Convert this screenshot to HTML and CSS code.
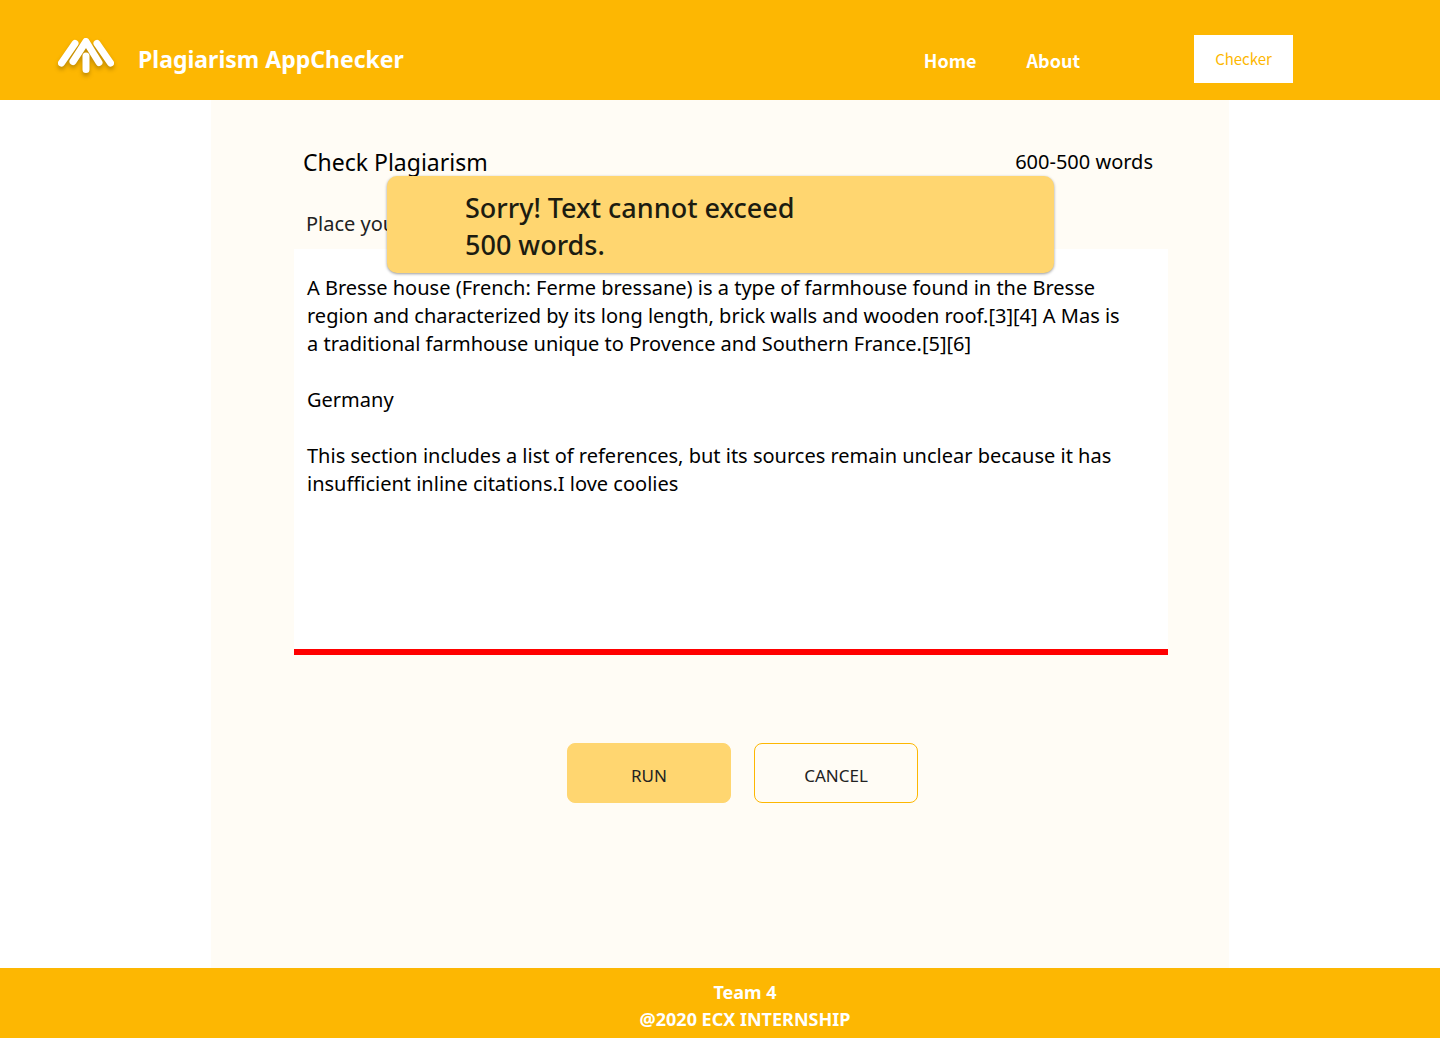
FILE: index.html
```html
<!DOCTYPE html>
<html lang="en">
<head>
<meta charset="utf-8">
<title>Plagiarism AppChecker</title>
<meta name="viewport" content="width=device-width, initial-scale=1">
<link rel="stylesheet" href="styles.css">
</head>
<body>
<header class="header">
  <a class="brand" href="#">
    <svg class="logo" viewBox="0 0 60 44" width="60" height="44" aria-hidden="true">
      <path d="M6.500 26 20 6.500M42 6.500 55.500 26M18 24.500 31 4.500 44 25.500M31 19V32.500"/>
    </svg>
    <span class="brand-name">Plagiarism AppChecker</span>
  </a>
  <nav class="nav">
    <a class="nav-link" href="#">Home</a>
    <a class="nav-link" href="#">About</a>
  </nav>
  <button class="checker" type="button">Checker</button>
</header>
<main class="main">
  <form class="panel">
    <div class="heading">
      <h1 class="title">Check Plagiarism</h1>
      <p class="count">600-500 words</p>
    </div>
    <label class="label" for="text">Place your text</label>
    <textarea class="editor" id="text" spellcheck="false">A Bresse house (French: Ferme bressane) is a type of farmhouse found in the Bresse region and characterized by its long length, brick walls and wooden roof.[3][4] A Mas is a traditional farmhouse unique to Provence and Southern France.[5][6]

Germany

This section includes a list of references, but its sources remain unclear because it has insufficient inline citations.I love coolies</textarea>
    <div class="actions">
      <button class="button button-run" type="button">RUN</button>
      <button class="button button-cancel" type="button">CANCEL</button>
    </div>
    <div class="toast" role="alert"><p class="toast-text">Sorry! Text cannot exceed 500 words.</p></div>
  </form>
</main>
<footer class="footer">
  <p class="footer-line">Team 4</p>
  <p class="footer-line">@2020 ECX INTERNSHIP</p>
</footer>
</body>
</html>
```

FILE: styles.css
```css
* {
  box-sizing: border-box;
}

body {
  margin: 0;
  min-height: 100vh;
  display: flex;
  flex-direction: column;
  background: #fff;
  color: #000;
  font-family: "Noto Sans", "Open Sans", sans-serif;
}

h1,
p {
  margin: 0;
  font-weight: 400;
}

.header {
  display: flex;
  align-items: center;
  min-height: 100px;
  padding: 18px 147px 0 55px;
  background: #fdb702;
}

.brand {
  display: flex;
  align-items: center;
  gap: 23px;
  margin-right: auto;
  color: #fff;
  text-decoration: none;
}

.logo {
  fill: none;
  stroke: #fff;
  stroke-width: 7;
  stroke-linecap: round;
  stroke-linejoin: round;
  filter: drop-shadow(0 3px 2px rgba(0, 0, 0, 0.25));
}

.brand-name {
  font-size: 23px;
  font-weight: 700;
}

.nav {
  display: flex;
  gap: 50px;
  margin-right: 114px;
  padding-top: 2px;
}

.nav-link {
  color: #fff;
  font: 700 18px/26px "Noto Sans CJK SC", sans-serif;
  text-decoration: none;
}

.checker {
  width: 99px;
  height: 48px;
  padding: 0;
  border: 0;
  background: #fff;
  color: #fdb702;
  font: 400 15px/24px "Noto Sans CJK SC", sans-serif;
}

.main {
  flex: 1;
  display: flex;
  padding: 0 211px;
}

.panel {
  position: relative;
  flex: 1;
  display: flex;
  flex-direction: column;
  padding: 46px 61px 40px 83px;
  background: #fffcf5;
}

.heading {
  display: flex;
  justify-content: space-between;
  padding: 0 15px 0 9px;
  line-height: 32px;
}

.title {
  font-size: 23px;
}

.count {
  font-size: 20px;
}

.label {
  margin-top: 32px;
  padding-left: 12px;
  color: #222;
  font-size: 20px;
  line-height: 28px;
}

.editor {
  height: 406px;
  margin-top: 11px;
  padding: 25px 36px 16px 13px;
  border: 0;
  border-bottom: 6px solid #f00;
  border-radius: 0;
  outline: 0;
  resize: none;
  overflow: hidden;
  background: #fff;
  color: #000;
  font: 400 20px/28px "Noto Sans", "Open Sans", sans-serif;
}

.actions {
  display: flex;
  justify-content: center;
  gap: 23px;
  margin-top: 88px;
  padding-left: 23px;
}

.button {
  width: 164px;
  height: 60px;
  padding: 6px 0 0;
  border: 1px solid #fdb702;
  border-radius: 8px;
  background: transparent;
  color: #222;
  font: 400 17px/24px "Noto Sans", "Open Sans", sans-serif;
}

.button-run {
  border-color: #ffd670;
  background: #ffd670;
}

.toast {
  position: absolute;
  top: 76px;
  left: 176px;
  right: 175px;
  padding: 13px 78px 10px;
  border-radius: 10px;
  background: #ffd670;
  box-shadow: 0 1px 3px rgba(0, 0, 0, 0.4);
}

.toast-text {
  max-width: 360px;
  color: #1c1c10;
  font-size: 27px;
  font-weight: 500;
  line-height: 37px;
}

.footer {
  min-height: 70px;
  padding: 11px 0 5px 50px;
  background: #fdb702;
  color: #fff;
  text-align: center;
}

.footer-line {
  font-size: 18px;
  font-weight: 700;
  line-height: 27px;
}
```
